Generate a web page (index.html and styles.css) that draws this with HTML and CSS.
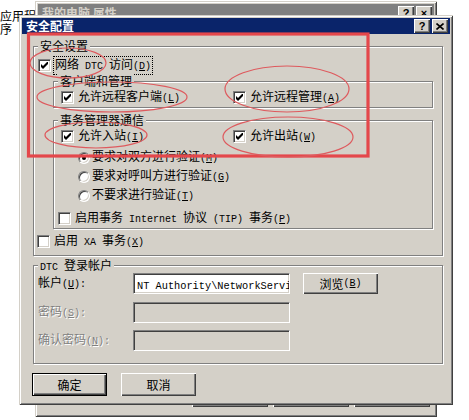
FILE: index.html
```html
<!DOCTYPE html>
<html lang="zh-CN">
<head>
  <meta charset="UTF-8">
  <title>安全配置</title>
  <link rel="stylesheet" href="styles.css">
</head>
<body>

  <div class="desk-label">应用程序</div>

  <!-- window behind the dialog -->
  <div class="back-window">
    <div class="back-title">
      <span>我的电脑 属性</span>
      <span class="caption-btns">
        <span class="tbtn">?</span>
        <span class="tbtn">×</span>
      </span>
    </div>
    <div class="back-body"></div>
    <div class="back-buttons">
      <span class="btn"></span>
      <span class="btn"></span>
      <span class="btn"></span>
    </div>
  </div>

  <div class="dialog">
    <div class="titlebar">
      <span class="title">安全配置</span>
      <span class="caption-btns">
        <span class="tbtn">?</span>
        <span class="tbtn">
          <svg width="8" height="7" viewBox="0 0 8 7"><path d="M0.5 0.5 L7.5 6.5 M7.5 0.5 L0.5 6.5" stroke="#000" stroke-width="1.6"/></svg>
        </span>
      </span>
    </div>

    <div class="dialog-body">
      <div class="group">
        <div class="group-label">安全设置</div>
        <div class="row">
          <span class="check"><svg width="7" height="7" viewBox="0 0 7 7"><path d="M0 2 L2 4 L7 -1 L7 2 L2 7 L0 5 Z"/></svg></span>
          <span class="focus">网络<span class="en"> DTC </span>访问<span class="en">(<u>D</u>)</span></span>
        </div>

        <div class="group sub">
          <div class="group-label">客户端和管理</div>
          <div class="row">
            <div class="item col1">
              <span class="check"><svg width="7" height="7" viewBox="0 0 7 7"><path d="M0 2 L2 4 L7 -1 L7 2 L2 7 L0 5 Z"/></svg></span>
              <span class="text">允许远程客户端<span class="en">(<u>L</u>)</span></span>
            </div>
            <div class="item">
              <span class="check"><svg width="7" height="7" viewBox="0 0 7 7"><path d="M0 2 L2 4 L7 -1 L7 2 L2 7 L0 5 Z"/></svg></span>
              <span class="text">允许远程管理<span class="en">(<u>A</u>)</span></span>
            </div>
          </div>
        </div>

        <div class="group sub sub-tx">
          <div class="group-label">事务管理器通信</div>
          <div class="row">
            <div class="item col1">
              <span class="check"><svg width="7" height="7" viewBox="0 0 7 7"><path d="M0 2 L2 4 L7 -1 L7 2 L2 7 L0 5 Z"/></svg></span>
              <span class="text">允许入站<span class="en">(<u>I</u>)</span></span>
            </div>
            <div class="item">
              <span class="check"><svg width="7" height="7" viewBox="0 0 7 7"><path d="M0 2 L2 4 L7 -1 L7 2 L2 7 L0 5 Z"/></svg></span>
              <span class="text">允许出站<span class="en">(<u>W</u>)</span></span>
            </div>
          </div>
          <div class="radios">
            <div class="radio-row"><span class="radio on"></span><span class="text">要求对双方进行验证<span class="en">(<u>M</u>)</span></span></div>
            <div class="radio-row"><span class="radio"></span><span class="text">要求对呼叫方进行验证<span class="en">(<u>G</u>)</span></span></div>
            <div class="radio-row"><span class="radio"></span><span class="text">不要求进行验证<span class="en">(<u>T</u>)</span></span></div>
          </div>
          <div class="row row-tip">
            <span class="check"></span>
            <span class="text">启用事务<span class="en"> Internet </span>协议<span class="en"> (TIP) </span>事务<span class="en">(<u>P</u>)</span></span>
          </div>
        </div>

        <div class="row row-xa">
          <span class="check"></span>
          <span class="text">启用<span class="en"> XA </span>事务<span class="en">(<u>X</u>)</span></span>
        </div>
      </div>

      <div class="group group-login">
        <div class="group-label"><span class="en">DTC </span>登录帐户</div>
        <div class="field-row">
          <span class="field-label">帐户<span class="en">(<u>U</u>):</span></span>
          <span class="field"><span class="en">NT Authority\NetworkService</span></span>
          <span class="btn browse">浏览<span class="en">(<u>B</u>)</span></span>
        </div>
        <div class="field-row row-pass">
          <span class="field-label disabled">密码<span class="en">(<u>S</u>):</span></span>
          <span class="field off"></span>
        </div>
        <div class="field-row row-confirm">
          <span class="field-label disabled">确认密码<span class="en">(<u>N</u>):</span></span>
          <span class="field off"></span>
        </div>
      </div>

      <div class="actions">
        <span class="btn default">确定</span>
        <span class="btn">取消</span>
      </div>
    </div>
  </div>

  <!-- red hand-drawn marks over the screenshot -->
  <svg class="marks" width="469" height="420" viewBox="0 0 469 420">
    <rect x="28.5" y="34" width="339.5" height="122" fill="none" stroke="#e4474b" stroke-width="3.2"/>
    <g fill="none" stroke="#de5a5e" stroke-width="1.2">
      <ellipse cx="68" cy="63" rx="38" ry="15"/>
      <ellipse cx="112" cy="97" rx="75" ry="15"/>
      <ellipse cx="287" cy="89" rx="62" ry="23"/>
      <ellipse cx="96" cy="135" rx="51" ry="13"/>
      <ellipse cx="288" cy="137" rx="65" ry="20"/>
    </g>
  </svg>

</body>
</html>
```

FILE: styles.css
```css
* {
  margin: 0;
  padding: 0;
  box-sizing: border-box;
}

body {
  width: 469px;
  height: 420px;
  position: relative;
  overflow: hidden;
  background: #fff;
  font-family: "Noto Sans CJK SC", sans-serif;
  font-size: 12px;
  line-height: 14px;
  color: #000;
}

.en {
  font-family: "Liberation Mono", monospace;
  font-size: 10px;
}

.desk-label {
  position: absolute;
  left: 0;
  top: 9px;
  width: 36px;
  line-height: 13px;
}

/* window frames */
.back-window, .dialog {
  position: absolute;
  background: #d4d0c8;
  padding: 3px;
  box-shadow: inset 1px 1px #d4d0c8, inset -1px -1px #404040,
              inset 2px 2px #fff, inset -2px -2px #808080;
  display: flex;
  flex-direction: column;
}

.back-window {
  left: 35px;
  top: 1px;
  width: 402px;
  height: 416px;
}

.back-title {
  height: 18px;
  background: #808080;
  color: #d4d0c8;
  font-weight: bold;
  display: flex;
  align-items: center;
  justify-content: space-between;
  padding: 0 2px 0 4px;
}

.back-body {
  flex: 1;
}

.back-buttons {
  display: flex;
  justify-content: flex-end;
  gap: 5px;
  padding: 0 4px 7px 0;
}

.back-buttons .btn {
  width: 76px;
  height: 23px;
}

.dialog {
  left: 19px;
  top: 15px;
  width: 434px;
  height: 390px;
}

.titlebar {
  height: 16px;
  background: #0a246a;
  color: #fff;
  font-weight: bold;
  display: flex;
  align-items: center;
  justify-content: space-between;
  padding: 0 2px 0 4px;
}

.caption-btns {
  display: flex;
  gap: 2px;
}

.tbtn {
  width: 16px;
  height: 14px;
  background: #d4d0c8;
  color: #000;
  font-family: "Liberation Sans", sans-serif;
  font-weight: bold;
  font-size: 11px;
  line-height: 12px;
  display: flex;
  align-items: center;
  justify-content: center;
  box-shadow: inset 1px 1px #fff, inset -1px -1px #404040, inset -2px -2px #808080;
}

.dialog-body {
  padding: 12px 7px 0 11px;
  display: flex;
  flex-direction: column;
}

/* group boxes */
.group {
  border: 1px solid #808080;
  box-shadow: inset 1px 1px #fff, 1px 1px #fff;
  padding: 0 4px 6px 4px;
  display: flex;
  flex-direction: column;
}

.group-label {
  align-self: flex-start;
  background: #d4d0c8;
  padding: 0 2px;
  margin-top: -8px;
  height: 14px;
}

.sub {
  margin: 8px 5px 0 15px;
  padding: 0 0 2px 7px;
}

.sub .group-label {
  margin-left: -3px;
}

.sub-tx {
  margin-top: 12px;
}

.row {
  display: flex;
  align-items: center;
  height: 16px;
  margin-top: 4px;
}

.sub .row {
  margin-top: 1px;
}

.item {
  display: flex;
  align-items: center;
}

.col1 {
  width: 172px;
}

.check {
  width: 13px;
  height: 13px;
  flex: none;
  background: #fff;
  border: 1px solid;
  border-color: #808080 #fff #fff #808080;
  box-shadow: inset 1px 1px #404040, inset -1px -1px #d4d0c8;
  display: flex;
  align-items: center;
  justify-content: center;
}

.text {
  margin-left: 4px;
  white-space: nowrap;
}

.focus {
  margin-left: 2px;
  padding: 0 1px;
  border: 1px dotted #000;
  white-space: nowrap;
}

.radios {
  margin: 4px 0 0 17px;
}

.radio-row {
  display: flex;
  align-items: center;
  height: 19px;
}

.radio-row .text {
  margin-left: 2px;
}

.radio {
  width: 12px;
  height: 12px;
  flex: none;
  border-radius: 50%;
  background: #fff;
  border: 1px solid;
  border-color: #808080 #fff #fff #808080;
  box-shadow: inset 1px 1px #404040, inset -1px -1px #d4d0c8;
  display: flex;
  align-items: center;
  justify-content: center;
}

.radio.on::after {
  content: "";
  width: 4px;
  height: 4px;
  border-radius: 50%;
  background: #000;
}

.sub .row-tip {
  margin: 5px 0 0 -3px;
}

.row-xa {
  margin-left: -1px;
}

/* login group */
.group-login {
  margin-top: 9px;
  padding-bottom: 12px;
}

.field-row {
  display: flex;
  align-items: center;
  height: 21px;
  margin-top: 1px;
}

.row-pass {
  margin-top: 8px;
}

.row-confirm {
  margin-top: 7px;
}

.field-label {
  width: 95px;
  white-space: nowrap;
}

.field-label.disabled {
  color: #808080;
  text-shadow: 1px 1px #fff;
}

.field {
  width: 157px;
  height: 21px;
  background: #fff;
  border: 1px solid;
  border-color: #808080 #fff #fff #808080;
  box-shadow: inset 1px 1px #404040, inset -1px -1px #d4d0c8;
  padding: 3px 0 0 3px;
  overflow: hidden;
  white-space: nowrap;
  line-height: 13px;
}

.field .en {
  font-size: 10.3px;
}

.field.off {
  background: #d4d0c8;
}

/* push buttons */
.btn {
  width: 75px;
  height: 23px;
  background: #d4d0c8;
  display: flex;
  align-items: center;
  justify-content: center;
  box-shadow: inset 1px 1px #fff, inset -1px -1px #404040, inset -2px -2px #808080;
}

.browse {
  height: 21px;
  margin-left: 13px;
}

.btn.default {
  border: 1px solid #000;
}

.actions {
  display: flex;
  gap: 14px;
  margin: 9px 0 0 -1px;
}

.marks {
  position: absolute;
  left: 0;
  top: 0;
  pointer-events: none;
}
```
